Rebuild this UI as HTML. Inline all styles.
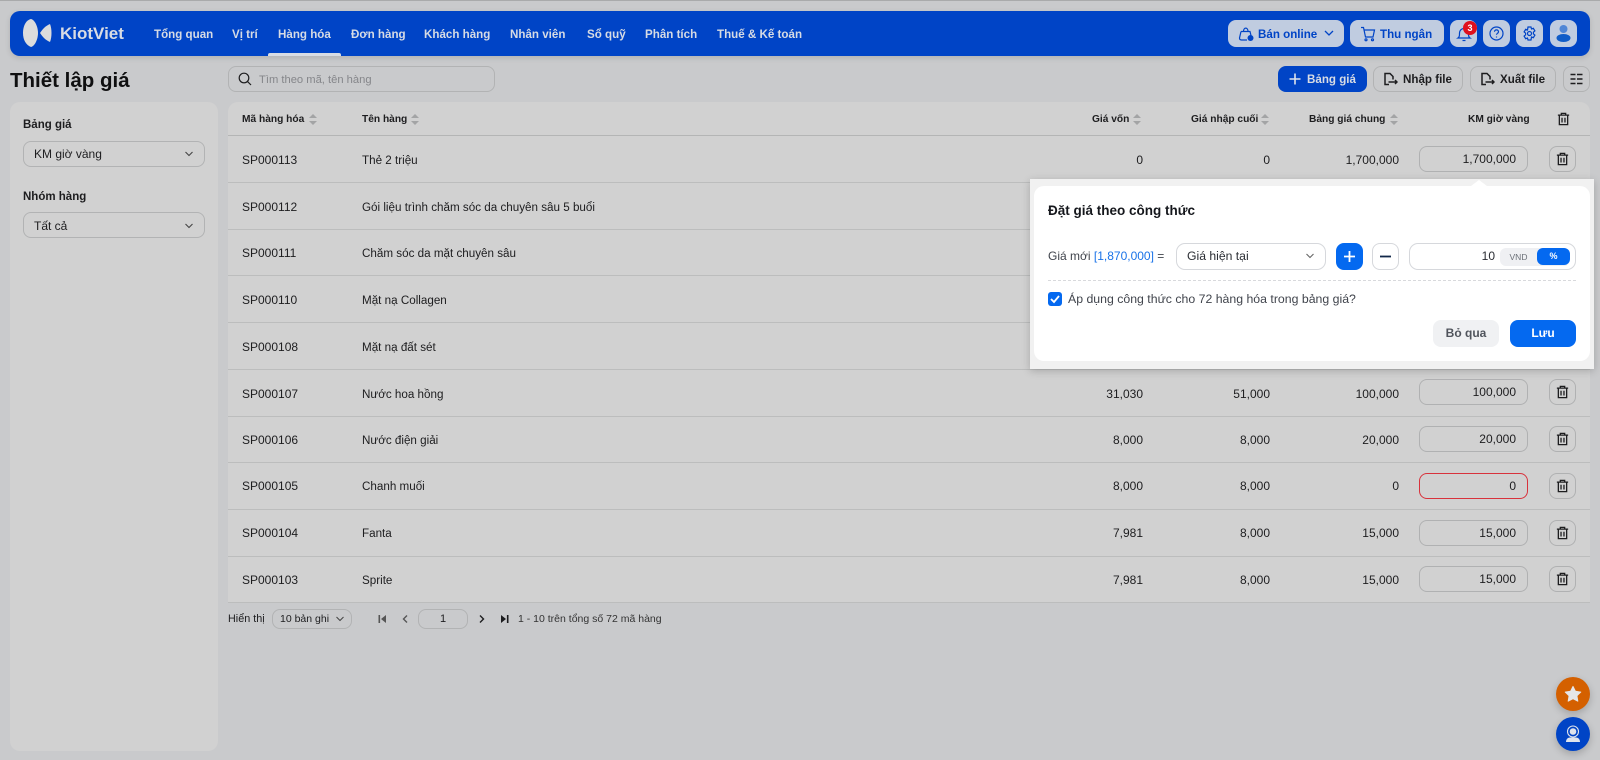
<!DOCTYPE html>
<html lang="vi"><head><meta charset="utf-8"><title>Thiết lập giá</title>
<style>
*{box-sizing:border-box}
html,body{margin:0;padding:0}
body{width:1600px;height:760px;overflow:hidden;position:relative;background:#c9cacc;font-family:"Liberation Sans","Noto Sans CJK SC",sans-serif;font-size:12px;color:#1d1d1f}
.a{position:absolute;white-space:nowrap}
.b{font-weight:700}
.box{position:absolute;border:1px solid #b2b3b4;border-radius:8px}
svg{position:absolute;display:block;fill:none}
.nav{position:absolute;top:27px;line-height:16px;font-size:11.6px;font-weight:700;color:#d6dbe4;white-space:nowrap}
.hb{position:absolute;top:20px;height:27px;background:#c0cce0;border-radius:8px}
.tb{position:absolute;top:66px;height:26px;border:1px solid #b2b3b4;border-radius:8px;font-weight:700;font-size:11.6px;line-height:26px;color:#1d1d1f}
.th{position:absolute;top:112px;line-height:16px;font-size:10.2px;font-weight:700;white-space:nowrap}
.row{position:absolute;left:228px;width:1362px;height:47px;border-bottom:1px solid #bcbdbd}
.row span{position:absolute;top:16px;line-height:16px;white-space:nowrap}
.row span:nth-child(2){font-size:11.65px;margin-top:1px}
.inp{position:absolute;left:1191px;top:10px;width:109px;height:26px;border:1px solid #b0b1b2;border-radius:8px;text-align:right;padding-right:11px;line-height:24px}
.del{position:absolute;left:1321px;top:10px;width:27px;height:26px;border:1px solid #b0b1b2;border-radius:8px}
.sort{position:absolute;width:9px;height:11px;top:114px}
.sort:before,.sort:after{content:"";position:absolute;left:0;border-left:4.5px solid transparent;border-right:4.5px solid transparent}
.sort:before{top:0;border-bottom:4.5px solid #a3a4a5}
.sort:after{bottom:0;border-top:4.5px solid #a3a4a5}
</style></head><body>
<div class="a" style="left:0;top:0;width:1600px;height:1px;background:#a9aaab"></div>

<!-- header -->
<div class="a" style="left:10px;top:11px;width:1580px;height:45px;background:#0044c6;border-radius:10px;box-shadow:0 2px 6px rgba(0,0,0,.12)"></div>
<svg style="left:22px;top:18px" width="32" height="30" viewBox="0 0 32 30"><path d="M9 1C4 2 1 8 1 15c0 7 3 12 8 14 4-1 7-8 7-14S13 2 9 1Z" fill="#dcdcdc"/><path d="M28 6c-5 2-8 6-10 9 2 3 5 7 10 9 2-5 2-13 0-18Z" fill="#dcdcdc"/></svg>
<div class="a" style="left:60px;top:22px;line-height:24px;font-size:17px;font-weight:700;color:#d8dce4">KiotViet</div>
<div class="nav" style="left:154px">Tổng quan</div>
<div class="nav" style="left:232px">Vị trí</div>
<div class="nav" style="left:278px">Hàng hóa</div>
<div class="nav" style="left:351px">Đơn hàng</div>
<div class="nav" style="left:424px">Khách hàng</div>
<div class="nav" style="left:510px">Nhân viên</div>
<div class="nav" style="left:587px">Sổ quỹ</div>
<div class="nav" style="left:645px">Phân tích</div>
<div class="nav" style="left:717px">Thuế &amp; Kế toán</div>
<div class="a" style="left:268px;top:53px;width:73px;height:3px;background:#d8dce4;border-radius:2px 2px 0 0"></div>

<div class="hb" style="left:1228px;width:116px"></div>
<svg style="left:1238px;top:26px" width="16" height="16" viewBox="0 0 16 16" stroke="#0044c6" stroke-width="1.2"><path d="M3 5.5h9l1 4M3 5.500 1.500 12c0 1.200.8 2 2 2H9M5.500 5.500C5.500 1 10 1 10 5.500"/><circle cx="12.500" cy="12" r="3" fill="#0044c6" stroke="none"/></svg>
<div class="a b" style="left:1258px;top:27px;line-height:16px;font-size:11.6px;color:#0044c6">Bán online</div>
<svg style="left:1323px;top:29px" width="12" height="9" viewBox="0 0 12 9" stroke="#0044c6" stroke-width="1.3"><path d="m2 2 4 4 4-4"/></svg>
<div class="hb" style="left:1350px;width:94px"></div>
<svg style="left:1360px;top:26px" width="16" height="16" viewBox="0 0 16 16" stroke="#0044c6" stroke-width="1.2"><path d="M1 1.500h2.500L5.500 11h7.500l1.500-7H4"/><circle cx="6" cy="13.800" r="1"/><circle cx="12.500" cy="13.800" r="1"/></svg>
<div class="a b" style="left:1380px;top:27px;line-height:16px;font-size:11.6px;color:#0044c6">Thu ngân</div>
<div class="hb" style="left:1450px;width:27px"></div>
<svg style="left:1456px;top:26px" width="16" height="16" viewBox="0 0 16 16" stroke="#0044c6" stroke-width="1.2"><path d="M2 12c1.500-1 1.500-2.500 1.500-5a4.500 4.500 0 0 1 9 0c0 2.500 0 4 1.500 5ZM6.500 14.500h3"/></svg>
<div class="a" style="left:1463px;top:21px;width:14px;height:14px;border-radius:50%;background:#e0101e;color:#fff;font-size:9px;font-weight:700;line-height:14px;text-align:center">3</div>
<div class="hb" style="left:1483px;width:27px"></div>
<svg style="left:1489px;top:26px" width="15" height="15" viewBox="0 0 15 15" stroke="#0044c6" stroke-width="1.2"><circle cx="7.500" cy="7.500" r="6.500"/><path d="M5.500 5.800c0-2.600 4-2.600 4 0 0 1.500-2 1.500-2 3M7.500 10.500v1"/></svg>
<div class="hb" style="left:1516px;width:27px"></div>
<svg style="left:1522px;top:26px" width="15" height="15" viewBox="0 0 15 15" stroke="#0044c6" stroke-width="1.2"><path d="M6 1h3l.5 2 1.800-.7 1.600 2.600-1.500 1.300v1.600l1.500 1.300-1.600 2.600-1.800-.7L9 14H6l-.5-2-1.800.7-1.600-2.600 1.500-1.300V7.200L2.100 5.900l1.600-2.600 1.800.7Z"/><circle cx="7.500" cy="7.500" r="2"/></svg>
<div class="hb" style="left:1550px;width:27px"></div>
<svg style="left:1554px;top:24px" width="19" height="19" viewBox="0 0 19 19"><circle cx="9.500" cy="5" r="4" fill="#4f86d6"/><ellipse cx="9.500" cy="14" rx="7" ry="4" fill="#0f5cc8"/></svg>

<!-- toolbar -->
<div class="a b" style="left:10px;top:67px;line-height:28px;font-size:20.5px;color:#0f0f10">Thiết lập giá</div>
<div class="box" style="left:228px;top:66px;width:267px;height:26px"></div>
<svg style="left:238px;top:72px" width="14" height="14" viewBox="0 0 14 14" stroke="#1d1d1f" stroke-width="1.2"><circle cx="6" cy="6" r="4.800"/><path d="m9.500 9.500 3.500 3.500"/></svg>
<div class="a" style="left:259px;top:72px;line-height:16px;color:#85868a;font-size:11.2px">Tìm theo mã, tên hàng</div>

<div class="a" style="left:1278px;top:66px;width:89px;height:26px;background:#0044c6;border-radius:8px"></div>
<svg style="left:1288px;top:72px" width="14" height="14" viewBox="0 0 14 14" stroke="#dfe4ec" stroke-width="1.6"><path d="M7 1.500v11M1.500 7h11"/></svg>
<div class="a b" style="left:1307px;top:72px;line-height:16px;font-size:11.6px;color:#d8dce4">Bảng giá</div>
<div class="tb" style="left:1373px;width:90px;padding-left:29px">Nhập file</div>
<svg style="left:1383px;top:72px" width="15" height="14" viewBox="0 0 15 14" stroke="#1d1d1f" stroke-width="1.5"><path d="M6 12.500H2V1.500h5l3 3v3M5.500 10h8.500M12 8l2 2-2 2"/></svg>
<div class="tb" style="left:1470px;width:86px;padding-left:29px">Xuất file</div>
<svg style="left:1480px;top:72px" width="15" height="14" viewBox="0 0 15 14" stroke="#1d1d1f" stroke-width="1.5"><path d="M6 12.500H2V1.500h5l3 3v3M5.500 10h8.500M12 8l2 2-2 2"/></svg>
<div class="tb" style="left:1563px;width:27px"></div>
<svg style="left:1570px;top:73px" width="13" height="12" viewBox="0 0 13 12" stroke="#1d1d1f" stroke-width="1.5"><path d="M.5 1.500h5M7 1.500h5.500M.5 6h5M7 6h5.500M.5 10.500h5M7 10.500h5.500"/></svg>

<!-- sidebar -->
<div class="a" style="left:10px;top:102px;width:208px;height:649px;background:#d1d1d1;border-radius:10px"></div>
<div class="a b" style="left:23px;top:117px;line-height:16px;font-size:11.5px">Bảng giá</div>
<div class="box" style="left:23px;top:141px;width:182px;height:26px"></div>
<div class="a" style="left:34px;top:146px;line-height:16px">KM giờ vàng</div>
<svg style="left:184px;top:150px" width="10" height="8" viewBox="0 0 10 8" stroke="#444" stroke-width="1.1"><path d="m1.500 2 3.500 3.500L8.500 2"/></svg>
<div class="a b" style="left:23px;top:189px;line-height:16px;font-size:11.5px">Nhóm hàng</div>
<div class="box" style="left:23px;top:212px;width:182px;height:26px"></div>
<div class="a" style="left:34px;top:218px;line-height:16px">Tất cả</div>
<svg style="left:184px;top:222px" width="10" height="8" viewBox="0 0 10 8" stroke="#444" stroke-width="1.1"><path d="m1.500 2 3.500 3.500L8.500 2"/></svg>

<!-- table -->
<div class="a" style="left:228px;top:102px;width:1362px;height:501px;background:#d1d1d1;border-radius:10px 10px 0 0"></div>
<div class="a" style="left:228px;top:135px;width:1362px;height:1px;background:#b4b5b5"></div>
<div class="th" style="left:242px">Mã hàng hóa</div><div class="sort" style="left:309px"></div>
<div class="th" style="left:362px">Tên hàng</div><div class="sort" style="left:411px"></div>
<div class="th" style="left:1092px">Giá vốn</div><div class="sort" style="left:1133px"></div>
<div class="th" style="left:1191px">Giá nhập cuối</div><div class="sort" style="left:1261px"></div>
<div class="th" style="left:1309px">Bảng giá chung</div><div class="sort" style="left:1390px"></div>
<div class="th" style="left:1468px">KM giờ vàng</div>
<svg style="left:1557px;top:112px" width="13" height="14" viewBox="0 0 15 16" stroke="#1d1d1f" stroke-width="1.5"><path d="M1 3.500h13M5 3.500V1.500h5v2M2.700 3.500v11h9.600v-11M5.800 6.500v5.500M9.200 6.500v5.500"/></svg>

<div class="row" style="top:136px"><span style="left:14px">SP000113</span><span style="left:134px">Thẻ 2 triệu</span><span style="right:447px">0</span><span style="right:320px">0</span><span style="right:191px">1,700,000</span><div class="inp">1,700,000</div><div class="del"><svg style="left:6px;top:5px" width="13" height="14" viewBox="0 0 15 16" stroke="#1d1d1f" stroke-width="1.5"><path d="M1 3.500h13M5 3.500V1.500h5v2M2.700 3.500v11h9.600v-11M5.800 6.500v5.500M9.200 6.500v5.500"/></svg></div></div>
<div class="row" style="top:183px"><span style="left:14px">SP000112</span><span style="left:134px">Gói liệu trình chăm sóc da chuyên sâu 5 buổi</span></div>
<div class="row" style="top:229px"><span style="left:14px">SP000111</span><span style="left:134px">Chăm sóc da mặt chuyên sâu</span></div>
<div class="row" style="top:276px"><span style="left:14px">SP000110</span><span style="left:134px">Mặt nạ Collagen</span></div>
<div class="row" style="top:323px"><span style="left:14px">SP000108</span><span style="left:134px">Mặt nạ đất sét</span></div>
<div class="row" style="top:370px"><span style="left:14px">SP000107</span><span style="left:134px">Nước hoa hồng</span><span style="right:447px">31,030</span><span style="right:320px">51,000</span><span style="right:191px">100,000</span><div class="inp" style="top:9px">100,000</div><div class="del" style="top:9px"><svg style="left:6px;top:5px" width="13" height="14" viewBox="0 0 15 16" stroke="#1d1d1f" stroke-width="1.5"><path d="M1 3.500h13M5 3.500V1.500h5v2M2.700 3.500v11h9.600v-11M5.800 6.500v5.500M9.200 6.500v5.500"/></svg></div></div>
<div class="row" style="top:416px"><span style="left:14px">SP000106</span><span style="left:134px">Nước điện giải</span><span style="right:447px">8,000</span><span style="right:320px">8,000</span><span style="right:191px">20,000</span><div class="inp">20,000</div><div class="del"><svg style="left:6px;top:5px" width="13" height="14" viewBox="0 0 15 16" stroke="#1d1d1f" stroke-width="1.5"><path d="M1 3.500h13M5 3.500V1.500h5v2M2.700 3.500v11h9.600v-11M5.800 6.500v5.500M9.200 6.500v5.500"/></svg></div></div>
<div class="row" style="top:463px"><span style="left:14px;top:15px">SP000105</span><span style="left:134px;top:15px">Chanh muối</span><span style="right:447px;top:15px">8,000</span><span style="right:320px;top:15px">8,000</span><span style="right:191px;top:15px">0</span><div class="inp" style="border-color:#d8323c">0</div><div class="del"><svg style="left:6px;top:5px" width="13" height="14" viewBox="0 0 15 16" stroke="#1d1d1f" stroke-width="1.5"><path d="M1 3.500h13M5 3.500V1.500h5v2M2.700 3.500v11h9.600v-11M5.800 6.500v5.500M9.200 6.500v5.500"/></svg></div></div>
<div class="row" style="top:510px"><span style="left:14px;top:15px">SP000104</span><span style="left:134px;top:15px">Fanta</span><span style="right:447px;top:15px">7,981</span><span style="right:320px;top:15px">8,000</span><span style="right:191px;top:15px">15,000</span><div class="inp">15,000</div><div class="del"><svg style="left:6px;top:5px" width="13" height="14" viewBox="0 0 15 16" stroke="#1d1d1f" stroke-width="1.5"><path d="M1 3.500h13M5 3.500V1.500h5v2M2.700 3.500v11h9.600v-11M5.800 6.500v5.500M9.200 6.500v5.500"/></svg></div></div>
<div class="row" style="top:556px"><span style="left:14px">SP000103</span><span style="left:134px">Sprite</span><span style="right:447px">7,981</span><span style="right:320px">8,000</span><span style="right:191px">15,000</span><div class="inp">15,000</div><div class="del"><svg style="left:6px;top:5px" width="13" height="14" viewBox="0 0 15 16" stroke="#1d1d1f" stroke-width="1.5"><path d="M1 3.500h13M5 3.500V1.500h5v2M2.700 3.500v11h9.600v-11M5.800 6.500v5.500M9.200 6.500v5.500"/></svg></div></div>

<!-- pagination -->
<div class="a" style="left:228px;top:611px;line-height:16px;font-size:10.8px">Hiển thị</div>
<div class="box" style="left:272px;top:609px;width:80px;height:20px"></div>
<div class="a" style="left:280px;top:611px;line-height:16px;font-size:10.5px">10 bản ghi</div>
<svg style="left:335px;top:615px" width="10" height="8" viewBox="0 0 10 8" stroke="#444" stroke-width="1"><path d="m1.500 2 3.500 3.500L8.500 2"/></svg>
<svg style="left:377px;top:613px" width="10" height="12" viewBox="0 0 10 12"><path d="M1.500 2h1.600v8H1.500ZM9 2v8L4 6Z" fill="#555"/></svg>
<svg style="left:401px;top:613px" width="8" height="12" viewBox="0 0 8 12" stroke="#555" stroke-width="1.4"><path d="M6 2.500 2.500 6 6 9.500"/></svg>
<div class="box" style="left:418px;top:609px;width:50px;height:20px;text-align:center;line-height:18px;font-size:11px">1</div>
<svg style="left:478px;top:613px" width="8" height="12" viewBox="0 0 8 12" stroke="#1d1d1f" stroke-width="1.4"><path d="M2 2.500 5.500 6 2 9.500"/></svg>
<svg style="left:500px;top:613px" width="10" height="12" viewBox="0 0 10 12"><path d="M1 2v8l5-4ZM6.900 2h1.600v8H6.900Z" fill="#1d1d1f"/></svg>
<div class="a" style="left:518px;top:611px;line-height:16px;font-size:10.5px;color:#333">1 - 10 trên tổng số 72 mã hàng</div>

<!-- popup -->
<div class="a" style="left:1030px;top:179px;width:564px;height:190px;background:#f1f1f1;box-shadow:0 2px 8px rgba(0,0,0,.2)"></div>
<div class="a" style="left:1471px;top:180px;width:0;height:0;border-left:8px solid transparent;border-right:8px solid transparent;border-bottom:6px solid #fff"></div>
<div class="a" style="left:1034px;top:186px;width:556px;height:175px;background:#fff;border-radius:10px"></div>
<div class="a b" style="left:1048px;top:203px;line-height:16px;font-size:13.5px;color:#15171c">Đặt giá theo công thức</div>
<div class="a" style="left:1048px;top:248px;line-height:16px;color:#40444c">Giá mới <span style="color:#1a73e8">[1,870,000]</span> =</div>
<div class="a" style="left:1176px;top:243px;width:150px;height:27px;border:1px solid #d6d8dc;border-radius:9px"></div>
<div class="a" style="left:1187px;top:248px;line-height:16px;font-size:12.2px;color:#2a2d33">Giá hiện tại</div>
<svg style="left:1305px;top:252px" width="10" height="8" viewBox="0 0 10 8" stroke="#666" stroke-width="1.1"><path d="m1.500 2 3.500 3.500L8.500 2"/></svg>
<div class="a" style="left:1336px;top:243px;width:27px;height:27px;background:#0469f0;border-radius:8px"></div>
<svg style="left:1342px;top:249px" width="15" height="15" viewBox="0 0 15 15" stroke="#fff" stroke-width="1.8"><path d="M7.500 2v11M2 7.500h11"/></svg>
<div class="a" style="left:1372px;top:243px;width:27px;height:27px;border:1px solid #d6d8dc;border-radius:8px"></div>
<svg style="left:1378px;top:249px" width="15" height="15" viewBox="0 0 15 15" stroke="#12284a" stroke-width="1.8"><path d="M2 7.500h11"/></svg>
<div class="a" style="left:1409px;top:243px;width:167px;height:27px;border:1px solid #d6d8dc;border-radius:9px"></div>
<div class="a" style="left:1480px;top:248px;width:15px;text-align:right;line-height:16px;color:#2a2d33">10</div>
<div class="a" style="left:1500px;top:248px;width:70px;height:18px;background:#eff0f3;border-radius:6px"></div>
<div class="a" style="left:1500px;top:249px;width:37px;text-align:center;line-height:16px;font-size:8.5px;color:#6b7078">VND</div>
<div class="a b" style="left:1537px;top:248px;width:33px;height:17px;background:#0469f0;border-radius:6px;text-align:center;line-height:17px;font-size:9px;color:#fff">%</div>
<div class="a" style="left:1048px;top:280px;width:528px;border-top:1px dashed #d8d9dc"></div>
<div class="a" style="left:1048px;top:292px;width:14px;height:14px;background:#0469f0;border-radius:3px"></div>
<svg style="left:1048px;top:292px" width="14" height="14" viewBox="0 0 14 14" stroke="#fff" stroke-width="1.8"><path d="m3 7 3 3 5-6"/></svg>
<div class="a" style="left:1068px;top:291px;line-height:16px;font-size:12.3px;color:#40444c">Áp dụng công thức cho 72 hàng hóa trong bảng giá?</div>
<div class="a" style="left:1433px;top:320px;width:66px;height:27px;background:#f0f1f3;border-radius:8px;text-align:center;line-height:27px;font-weight:700;color:#50545c">Bỏ qua</div>
<div class="a b" style="left:1510px;top:320px;width:66px;height:27px;background:#0469f0;border-radius:8px;text-align:center;line-height:27px;color:#fff">Lưu</div>

<!-- fabs -->
<div class="a" style="left:1556px;top:677px;width:34px;height:34px;border-radius:50%;background:#d46000;box-shadow:0 3px 8px rgba(0,0,0,.2)"></div>
<svg style="left:1564px;top:685px" width="18" height="18" viewBox="0 0 20 20"><path d="m10 1.500 2.700 5.400 6 .9-4.300 4.200 1 6L10 15.200 4.600 18l1-6L1.300 7.800l6-.9Z" fill="#e6e6e8" stroke="#e6e6e8" stroke-linejoin="round"/></svg>
<div class="a" style="left:1556px;top:717px;width:34px;height:34px;border-radius:50%;background:#0044c6;box-shadow:0 3px 8px rgba(0,0,0,.2)"></div>
<svg style="left:1565px;top:725px" width="16" height="18" viewBox="0 0 16 18"><circle cx="8" cy="6.500" r="5.500" stroke="#dfe4ec" stroke-width="1.1"/><circle cx="8" cy="6.500" r="3.300" fill="#dfe4ec"/><path d="M1 17c0-2.500 1.500-4.500 4-4.500h6c2.500 0 4 2 4 4.500Z" fill="#dfe4ec"/></svg>
</body></html>
